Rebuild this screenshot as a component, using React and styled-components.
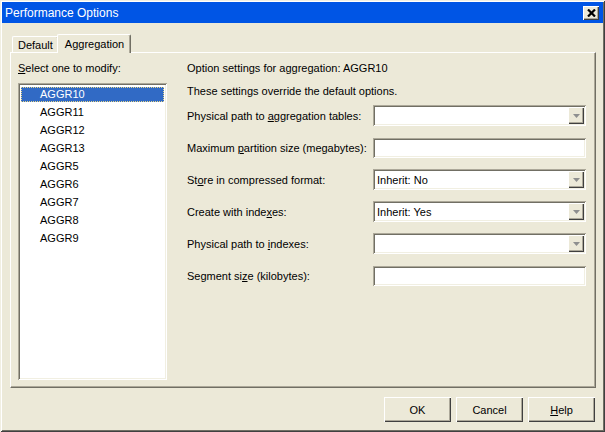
import styled, { createGlobalStyle } from 'styled-components'

const GlobalStyle = createGlobalStyle`
  html, body {
    margin: 0;
    padding: 0;
    background: #ece9d8;
  }
  body {
    font-family: "Liberation Sans", Arial, sans-serif;
    font-size: 11px;
    color: #000;
  }
`

const sunken = `
  box-shadow: inset 1px 1px #aca899, inset -1px -1px #fff,
    inset 2px 2px #716f64, inset -2px -2px #f1efe2;
`

const raised = `
  box-shadow: inset 1px 1px #fff, inset -1px -1px #404040,
    inset -2px -2px #aca899;
`

const Window = styled.div`
  width: 605px;
  height: 432px;
  box-sizing: border-box;
  padding: 2px;
  background: #ece9d8;
  box-shadow: inset 1px 1px #f1efe2, inset -1px -1px #404040,
    inset 2px 2px #fff, inset -2px -2px #716f64;
  display: flex;
  flex-direction: column;
`

const TitleBar = styled.div`
  height: 21px;
  background: #0055e5;
  display: flex;
  align-items: center;
  justify-content: space-between;
  padding: 0 4px 0 3px;
  flex-shrink: 0;
`

const Title = styled.span`
  color: #fff;
  font-size: 12px;
`

const CloseButton = styled.div`
  width: 16px;
  height: 14px;
  background: #ece9d8;
  ${raised}
  display: flex;
  align-items: center;
  justify-content: center;
`

const Body = styled.div`
  flex: 1;
  display: flex;
  flex-direction: column;
  padding: 10px 7px 8px 8px;
`

const TabStrip = styled.div`
  display: flex;
  align-items: flex-end;
  height: 19px;
  padding-left: 2px;
  position: relative;
  z-index: 1;
`

const Tab = styled.div`
  height: ${(p) => (p.$active ? '19px' : '16px')};
  margin: ${(p) => (p.$active ? '0 0 -1px -2px' : '0')};
  padding: ${(p) => (p.$active ? '0 6px 0 7px' : '1px 5px 0')};
  display: flex;
  align-items: center;
  background: #ece9d8;
  box-sizing: border-box;
  border-left: 1px solid #fff;
  border-top: 1px solid #fff;
  border-right: 1px solid #716f64;
  box-shadow: inset -1px 0 #aca899;
  border-radius: 2px 2px 0 0;
`

const Panel = styled.div`
  height: 336px;
  box-sizing: border-box;
  border-left: 1px solid #fff;
  border-top: 1px solid #fff;
  border-right: 1px solid #716f64;
  border-bottom: 1px solid #716f64;
  box-shadow: inset -1px -1px #aca899;
  display: flex;
  padding: 8px 8px 7px 7px;
`

const LeftColumn = styled.div`
  width: 149px;
  display: flex;
  flex-direction: column;
`

const Caption = styled.div`
  height: 14px;
  line-height: 14px;
  white-space: nowrap;
`

const ListBox = styled.div`
  margin-top: 8px;
  flex: 1;
  background: #fff;
  ${sunken}
  padding: 4px 3px;
`

const ListItem = styled.div`
  height: 15px;
  line-height: 15px;
  margin-bottom: 3px;
  padding-left: 19px;
  color: ${(p) => (p.$selected ? '#fff' : '#000')};
  background: ${(p) => (p.$selected ? '#316ac5' : 'transparent')};
  outline: ${(p) => (p.$selected ? '1px dotted #e8d68a' : 'none')};
  outline-offset: -1px;
`

const RightColumn = styled.div`
  flex: 1;
  padding-left: 20px;
  display: flex;
  flex-direction: column;
`

const Intro = styled(Caption)`
  margin-top: 9px;
`

const FormGrid = styled.div`
  margin-top: 7px;
  display: grid;
  grid-template-columns: 186px 213px;
  grid-auto-rows: 21px;
  row-gap: 11px;
  align-items: center;
`

const Label = styled.div`
  white-space: nowrap;
`

const Field = styled.div`
  height: ${(p) => (p.$combo ? '21px' : '20px')};
  background: #fff;
  ${sunken}
  display: flex;
  align-items: center;
  justify-content: space-between;
  padding: 2px;
  box-sizing: border-box;
`

const FieldText = styled.span`
  padding-left: 2px;
`

const DropButton = styled.div`
  width: 16px;
  height: 17px;
  background: #ece9d8;
  ${raised}
  display: flex;
  align-items: center;
  justify-content: center;
`

const ButtonRow = styled.div`
  margin-top: 9px;
  display: flex;
  justify-content: flex-end;
  gap: 5px;
  padding-right: 1px;
`

const Button = styled.div`
  width: 67px;
  height: 25px;
  box-sizing: border-box;
  background: #ece9d8;
  ${raised}
  display: flex;
  align-items: center;
  justify-content: center;
`

const Key = styled.u`
  text-decoration-thickness: 1px;
  text-underline-offset: 1px;
`

const Arrow = () => (
  <svg width="7" height="4" viewBox="0 0 7 4">
    <path d="M0 0h7L3.5 4z" fill="#8e8f8f" />
  </svg>
)

const CloseGlyph = () => (
  <svg width="9" height="8" viewBox="0 0 9 8">
    <path d="M1 0.5l7 7M8 0.5l-7 7" stroke="#000" strokeWidth="2.2" />
  </svg>
)

const items = ['AGGR10', 'AGGR11', 'AGGR12', 'AGGR13', 'AGGR5', 'AGGR6', 'AGGR7', 'AGGR8', 'AGGR9']

const fields = [
  { label: <>Physical path to <Key>a</Key>ggregation tables:</>, combo: true },
  { label: <>Maximum <Key>p</Key>artition size (megabytes):</> },
  { label: <>St<Key>o</Key>re in compressed format:</>, combo: true, value: 'Inherit: No' },
  { label: <>Create with inde<Key>x</Key>es:</>, combo: true, value: 'Inherit: Yes' },
  { label: <>Physical path to <Key>i</Key>ndexes:</>, combo: true },
  { label: <>Segment si<Key>z</Key>e (kilobytes):</> },
]

function FormRowParts({ label, combo, value }) {
  return (
    <>
      <Label>{label}</Label>
      <Field $combo={combo}>
        <FieldText>{value}</FieldText>
        {combo && (
          <DropButton>
            <Arrow />
          </DropButton>
        )}
      </Field>
    </>
  )
}

export default function App() {
  return (
    <>
      <GlobalStyle />
      <Window>
        <TitleBar>
          <Title>Performance Options</Title>
          <CloseButton>
            <CloseGlyph />
          </CloseButton>
        </TitleBar>
        <Body>
          <TabStrip>
            <Tab>Default</Tab>
            <Tab $active>Aggregation</Tab>
          </TabStrip>
          <Panel>
            <LeftColumn>
              <Caption>
                <Key>S</Key>elect one to modify:
              </Caption>
              <ListBox>
                {items.map((name, i) => (
                  <ListItem key={name} $selected={i === 0}>
                    {name}
                  </ListItem>
                ))}
              </ListBox>
            </LeftColumn>
            <RightColumn>
              <Caption>Option settings for aggregation: AGGR10</Caption>
              <Intro>These settings override the default options.</Intro>
              <FormGrid>
                {fields.map((f, i) => (
                  <FormRowParts key={i} {...f} />
                ))}
              </FormGrid>
            </RightColumn>
          </Panel>
          <ButtonRow>
            <Button>OK</Button>
            <Button>Cancel</Button>
            <Button>
              <span>
                <Key>H</Key>elp
              </span>
            </Button>
          </ButtonRow>
        </Body>
      </Window>
    </>
  )
}
